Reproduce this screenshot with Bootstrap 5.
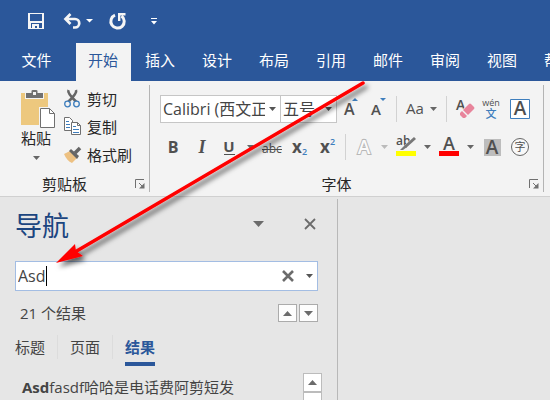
<!DOCTYPE html>
<html lang="zh-CN">
<head>
<meta charset="utf-8">
<meta name="viewport" content="width=device-width, initial-scale=1">
<title>导航</title>
<link href="https://cdn.jsdelivr.net/npm/bootstrap@5.3.0/dist/css/bootstrap.min.css" rel="stylesheet">
<style>
  :root { --blue: #2b579a; --ink: #444; --line: #c6c6c6; }
  body { font-family: "Open Sans", "Noto Sans CJK SC", sans-serif; font-size: 15px; line-height: 20px; color: var(--ink); background: #e6e6e6; }
  button { font: inherit; color: inherit; background: none; border: 0; padding: 0; }
  svg { display: block; flex: none; overflow: visible; }
  .titlebar { background: var(--blue); height: 43px; padding: 0 26px; gap: 16px; }
  .ribbon-tabs { background: var(--blue); height: 38px; gap: 2px; }
  .ribbon-tabs .nav-link { flex: none; width: 55px; padding: 7px 1px 11px 0; border-radius: 0; color: #fff; text-align: center; }
  .ribbon-tabs .nav-link.file-tab { width: 74px; }
  .ribbon-tabs .nav-link.active { background: #f3f3f3; color: var(--blue); }
  .ribbon { background: #f3f3f3; height: 116px; padding: 4px 0; border-bottom: 1px solid #d0d0d0; color: #262626; }
  .group { border-right: 1px solid #b4b4b4; }
  .clip-group { width: 150px; flex: none; }
  .font-group { width: 394px; flex: none; padding-left: 9px; }
  .paste { width: 36px; margin: 5px 8px 0 18px; }
  .paste .more { margin-top: 8px; }
  .clip-list button { height: 28px; gap: 4px; white-space: nowrap; padding-left: 1px; }
  .caption-row { height: 16px; padding-right: 4px; }
  .caption-row span { padding-right: 6px; }
  .font-group .caption-row { margin-left: -9px; }
  .combo.form-select { height: 28px; padding: 0 15px 0 2px; border: 1px solid var(--line); border-radius: 0; font-size: 16px; line-height: 26px; color: var(--ink); background-color: #fff; background-position: right 4px center; background-size: 7px 4px; text-overflow: clip;
    background-image: url("data:image/svg+xml,%3Csvg xmlns='http://www.w3.org/2000/svg' viewBox='0 0 7 4'%3E%3Cpath d='M0 0h7L3.500 4z' fill='%23555'/%3E%3C/svg%3E"); }
  .combo-name { width: 121px; flex: none; margin-left: 1px; }
  .combo-size { width: 57px; flex: none; margin-left: -1px; }
  .tool-row { height: 28px; margin-top: 10px; }
  .tool { width: 28px; height: 28px; flex: none; display: flex; align-items: center; justify-content: center; color: #505050; }
  .tool.drop { width: 15px; }
  .tool.wide { width: 43px; gap: 5px; }
  .tool svg text { font-family: "Open Sans", "Noto Sans CJK SC", sans-serif; fill: #505050; }
  .tool svg .accent { fill: #3e7ebd; }
  .tool svg .hollow { fill: #fafafa; }
  .tool svg .serif { font-family: "Liberation Serif", serif; }
  .divider { width: 1px; height: 26px; margin: 0 3px; background: #d2d2d2; flex: none; }
  .nav-pane { width: 338px; flex: none; margin-top: 2px; padding: 0 19px 0 15px; border-right: 1px solid #b8b8b8; overflow: hidden; }
  .nav-pane > * { flex-shrink: 0; }
  .pane-title { font-size: 27px; font-weight: 400; line-height: 36px; color: #1b4580; margin: 0; padding-top: 4px; }
  .pane-head { height: 50px; padding-right: 2px; }
  .search { height: 30px; margin-top: 12px; background: #fff; border: 1px solid #a3bde3; padding-right: 4px; }
  .search input { min-width: 0; flex: 1; border: 0; outline: 0; padding: 0 2px; font-size: 16px; color: var(--ink); background: none; }
  .caret { position: absolute; left: 30px; top: 4px; width: 1px; height: 20px; background: #000; }
  .count { height: 44px; padding-left: 5px; gap: 2px; }
  .step { width: 19px; height: 18px; background: #fdfdfd; border: 1px solid #ababab; display: flex; align-items: center; justify-content: center; }
  .pane-tabs { gap: 12px; }
  .pane-tabs .nav-link { padding: 2px 0 5px; color: var(--ink); font-size: 15px; border-bottom: 4px solid transparent; border-radius: 0; }
  .pane-tabs .nav-link.active { color: var(--blue); font-weight: 700; border-color: var(--blue); }
  .tab-rule { width: 1px; height: 24px; background: #dcdcdc; }
  .results { margin-top: 7px; }
  .results a { color: var(--ink); text-decoration: none; padding: 4px 0 0 7px; white-space: nowrap; }
  .scroller { width: 19px; margin-right: -4px; }
  .scroller button, .thumb { width: 19px; height: 19px; background: #fff; border: 1px solid #bcbcbc; }
  .thumb { height: 80px; }
  .pointer { position: absolute; left: 0; top: 0; pointer-events: none; }
</style>
<script src="https://cdn.jsdelivr.net/npm/bootstrap@5.3.0/dist/js/bootstrap.bundle.min.js"></script>
</head>
<body class="vh-100 d-flex flex-column overflow-hidden position-relative">
<header>
  <div class="titlebar d-flex align-items-center">
    <button aria-label="保存"><svg width="20" height="20" viewBox="0 0 20 20"><path d="M2 1h16v16H2z" fill="#f5f5f5"/><path d="M4 2h12v7H4zM5 11h11v5H5z" fill="#2b579a"/><path d="M6 12h7v4h-2v-2H9v2H6z" fill="#f5f5f5"/></svg></button>
    <button aria-label="撤销" class="d-flex align-items-center"><svg width="20" height="18" viewBox="0 0 20 18"><path d="M8.500 1 3.500 6l5 5M4 6h9a4 4 0 0 1 0 8.500h-2" fill="none" stroke="#f5f5f5" stroke-width="2.700"/></svg><svg class="ms-1" width="7" height="6" viewBox="0 0 7 6"><path d="M0 0h7L3.500 3.500z" fill="#fff"/></svg></button>
    <button aria-label="重复"><svg width="18" height="18" viewBox="0 0 18 18"><path d="M6 2.200A6.700 6.700 0 1 0 12.500 3" fill="none" stroke="#f5f5f5" stroke-width="3"/><path d="M9 1.200h7.500M10.200 0v8" fill="none" stroke="#f5f5f5" stroke-width="2.400"/></svg></button>
    <button aria-label="自定义快速访问工具栏" class="ms-2"><svg width="6" height="7" viewBox="0 0 6 7"><path d="M0 0h6v1H0zM0 3h6L3 6.500z" fill="#fff"/></svg></button>
  </div>
  <nav class="ribbon-tabs nav flex-nowrap overflow-hidden">
    <a class="nav-link file-tab" href="#">文件</a><a class="nav-link active" href="#">开始</a><a class="nav-link" href="#">插入</a><a class="nav-link" href="#">设计</a><a class="nav-link" href="#">布局</a><a class="nav-link" href="#">引用</a><a class="nav-link" href="#">邮件</a><a class="nav-link" href="#">审阅</a><a class="nav-link" href="#">视图</a><a class="nav-link" href="#">帮助</a>
  </nav>
  <div class="ribbon d-flex overflow-hidden">
    <section class="group clip-group d-flex flex-column justify-content-between">
      <div class="d-flex align-items-start">
        <button class="paste d-flex flex-column align-items-center">
          <svg width="30" height="38" viewBox="0 0 30 38"><path d="M0 3h27v32H0z" fill="#edc87e"/><path d="M4 9V2h7V0h6v2h6v7z" fill="#f3f3f3"/><path d="M5 8V3h5.500V1Q10.500 0 12 0h3q1.500 0 1.500 1v2H22v5z" fill="#707070"/><path d="M12 2h3v3h-3z" fill="#f3f3f3"/><path d="M18 17h17v21H18z" fill="#f3f3f3"/><path d="M19.500 18.500h9l5 5v14h-14z" fill="#fff" stroke="#707070"/><path d="M28.500 18.500v5h5" fill="none" stroke="#707070"/></svg>
          <span>粘贴</span>
          <svg class="more" width="7" height="4" viewBox="0 0 7 4"><path d="M0 0h7L3.500 4z" fill="#666"/></svg>
        </button>
        <div class="clip-list d-flex flex-column">
          <button class="d-flex align-items-center"><svg width="20" height="20" viewBox="0 0 20 20"><path d="M5.500 1Q4 4 13.500 13M13 1q1.500 3-8 12" fill="none" stroke="#666" stroke-width="2.600"/><circle cx="4.500" cy="15" r="2.800" fill="#f3f3f3" stroke="#3e7ebd" stroke-width="1.300"/><circle cx="13.500" cy="15" r="2.800" fill="#f3f3f3" stroke="#3e7ebd" stroke-width="1.300"/></svg>剪切</button>
          <button class="d-flex align-items-center"><svg width="20" height="20" viewBox="0 0 20 20"><path d="M1.500.500h5l3 3v10h-8z" fill="#fff" stroke="#707070"/><path d="M3 4.500h3M3 7.500h4M3 10.500h4" stroke="#3e7ebd"/><path d="M8.500 5.500h6l3 3v9h-9z" fill="#fff" stroke="#707070"/><path d="M14.500 5.500v3h3" fill="none" stroke="#707070"/><path d="M10 9.500h3M10 12.500h6M10 15.500h6" stroke="#3e7ebd"/></svg>复制</button>
          <button class="d-flex align-items-center"><svg width="20" height="20" viewBox="0 0 20 20"><path d="m1 9 6-3 7 7-5 5q-5-2-8-9z" fill="#edc182"/><path d="m8 4 8 7-2 3-8-8z" fill="#666"/><path d="m12 8 5-5" stroke="#666" stroke-width="3.500"/></svg>格式刷</button>
        </div>
      </div>
      <div class="caption-row d-flex align-items-center"><span class="flex-fill text-center">剪贴板</span><button aria-label="剪贴板选项"><svg width="10" height="10" viewBox="0 0 10 10"><path d="M.5 9V.500H9M4 4l4 4" fill="none" stroke="#707070"/><path d="M9.500 4v5.500H4z" fill="#707070"/></svg></button></div>
    </section>
    <section class="group font-group d-flex flex-column justify-content-between">
      <div>
        <div class="tool-row d-flex align-items-center">
          <select class="combo combo-name form-select" aria-label="字体"><option>Calibri (西文正文)</option></select>
          <select class="combo combo-size form-select" aria-label="字号"><option>五号</option></select>
          <button class="tool" aria-label="增大字号"><svg width="20" height="20" viewBox="0 0 20 20"><text x="3" y="16" font-size="16" font-weight="600">A</text><path d="M11 2h6l-3-3z" fill="#3e7ebd"/></svg></button>
          <button class="tool" aria-label="减小字号"><svg width="20" height="20" viewBox="0 0 20 20"><text x="2" y="16" font-size="15" font-weight="600">A</text><path d="M11-1h6l-3 3z" fill="#3e7ebd"/></svg></button>
          <span class="divider"></span>
          <button class="tool wide" aria-label="更改大小写"><svg width="18" height="20" viewBox="0 0 18 20"><text x="-1" y="15" font-size="15">Aa</text></svg><svg width="7" height="4" viewBox="0 0 7 4"><path d="M0 0h7L3.500 4z" fill="#666"/></svg></button>
          <span class="divider"></span>
          <button class="tool" aria-label="清除格式"><svg width="20" height="20" viewBox="0 0 20 20"><text x="2" y="11" font-size="14" font-weight="600">A</text><path d="m5 14 9-9 2-1 4 4v2l-9 9H8z" fill="#f3f3f3"/><path d="m9 11 6-6q1-1 2 0l3 3q1 1 0 2l-6 6z" fill="#e8849b"/><path d="m8 12 5 5-2 2H9l-3-3v-2z" fill="#e8849b"/></svg></button>
          <button class="tool" aria-label="拼音指南"><svg width="20" height="24" viewBox="0 0 20 24"><text x="9" y="9" font-size="9" text-anchor="middle">wén</text><text class="accent" x="9" y="21" font-size="11" font-weight="500" text-anchor="middle">文</text></svg></button>
          <button class="tool" aria-label="字符边框"><svg width="20" height="20" viewBox="0 0 20 20"><path d="M.5.500h19v19H.500z" fill="#fff" stroke="#3e7ebd"/><text x="10" y="16" font-size="19" font-weight="600" text-anchor="middle">A</text></svg></button>
        </div>
        <div class="tool-row d-flex align-items-center">
          <button class="tool" aria-label="加粗"><svg width="20" height="20" viewBox="0 0 20 20"><text x="10" y="16" font-size="16" font-weight="700" text-anchor="middle">B</text></svg></button>
          <button class="tool" aria-label="倾斜"><svg width="20" height="20" viewBox="0 0 20 20"><text class="serif" x="11" y="16" font-size="18" font-weight="700" font-style="italic" text-anchor="middle">I</text></svg></button>
          <button class="tool" aria-label="下划线"><svg width="20" height="20" viewBox="0 0 20 20"><text x="10" y="15" font-size="15" font-weight="700" text-anchor="middle">U</text><path d="M5 17h11v1H5z" fill="#505050"/></svg></button>
          <button class="tool drop" aria-label="下划线样式"><svg width="7" height="4" viewBox="0 0 7 4"><path d="M0 0h7L3.500 4z" fill="#666"/></svg></button>
          <button class="tool" aria-label="删除线"><svg width="22" height="20" viewBox="0 0 22 20"><text x="11" y="16" font-size="12" text-anchor="middle">abc</text><path d="M1 12h20v1H1z" fill="#505050"/></svg></button>
          <button class="tool" aria-label="下标"><svg width="20" height="20" viewBox="0 0 20 20"><text x="2" y="16" font-size="17" font-weight="700">x</text><text class="accent" x="12" y="18" font-size="9" font-weight="600">2</text></svg></button>
          <button class="tool" aria-label="上标"><svg width="20" height="20" viewBox="0 0 20 20"><text x="2" y="16" font-size="17" font-weight="700">x</text><text class="accent" x="12" y="8" font-size="9" font-weight="600">2</text></svg></button>
          <span class="divider"></span>
          <button class="tool" aria-label="文本效果"><svg width="20" height="20" viewBox="0 0 20 20"><text class="hollow" x="11" y="17" font-size="19" font-weight="600" text-anchor="middle" stroke="#b8b8b8" stroke-width="2" paint-order="stroke">A</text></svg></button>
          <button class="tool drop" aria-label="文本效果选项"><svg width="7" height="4" viewBox="0 0 7 4"><path d="M0 0h7L3.500 4z" fill="#bbb"/></svg></button>
          <button class="tool" aria-label="突出显示"><svg width="20" height="22" viewBox="0 0 20 22"><text x="0" y="9" font-size="12" font-weight="600">ab</text><path d="m19 2-9 9" stroke="#f3f3f3" stroke-width="4"/><path d="m19 2-10 9" stroke="#777" stroke-width="3"/><path d="m9 9 2 2-4 3H4z" fill="#777"/><path d="M0 15h20v5H0z" fill="#ff0"/></svg></button>
          <button class="tool drop" aria-label="突出显示颜色"><svg width="7" height="4" viewBox="0 0 7 4"><path d="M0 0h7L3.500 4z" fill="#666"/></svg></button>
          <button class="tool" aria-label="字体颜色"><svg width="20" height="22" viewBox="0 0 20 22"><text x="10" y="14" font-size="18" font-weight="600" text-anchor="middle">A</text><path d="M0 15h20v5H0z" fill="#f00"/></svg></button>
          <button class="tool drop" aria-label="更多颜色"><svg width="7" height="4" viewBox="0 0 7 4"><path d="M0 0h7L3.500 4z" fill="#666"/></svg></button>
          <button class="tool" aria-label="字符底纹"><svg width="17" height="17" viewBox="0 0 17 17"><path d="M0 0h17v17H0z" fill="#bdbdbd"/><text x="8" y="15" font-size="19" font-weight="600" text-anchor="middle">A</text></svg></button>
          <button class="tool" aria-label="带圈字符"><svg width="20" height="20" viewBox="0 0 20 20"><circle cx="10" cy="10" r="8.500" fill="#f8f8f8" stroke="#666"/><text x="10" y="14" font-size="11" text-anchor="middle">字</text></svg></button>
        </div>
      </div>
      <div class="caption-row d-flex align-items-center"><span class="flex-fill text-center">字体</span><button aria-label="字体选项"><svg width="10" height="10" viewBox="0 0 10 10"><path d="M.5 9V.500H9M4 4l4 4" fill="none" stroke="#707070"/><path d="M9.500 4v5.500H4z" fill="#707070"/></svg></button></div>
    </section>
  </div>
</header>
<main class="d-flex flex-fill overflow-hidden">
  <aside class="nav-pane d-flex flex-column">
    <div class="pane-head d-flex align-items-center">
      <h1 class="pane-title flex-fill">导航</h1>
      <button aria-label="窗格选项"><svg width="11" height="6" viewBox="0 0 11 6"><path d="M0 0h11L5.500 6z" fill="#6b6b6b"/></svg></button>
      <button aria-label="关闭" class="ms-4 ps-3"><svg width="12" height="12" viewBox="0 0 12 12"><path d="m1 1 10 10M11 1 1 11" stroke="#6b6b6b" stroke-width="1.800"/></svg></button>
    </div>
    <div class="search d-flex align-items-center position-relative">
      <input type="text" value="Asd" aria-label="搜索文档"><span class="caret"></span>
      <button aria-label="清除"><svg width="12" height="12" viewBox="0 0 12 12"><path d="m1 1 10 10M11 1 1 11" stroke="#6b6b6b" stroke-width="2.600"/></svg></button>
      <button aria-label="搜索选项" class="ms-2 ps-1"><svg width="7" height="4" viewBox="0 0 7 4"><path d="M0 0h7L3.500 4z" fill="#555"/></svg></button>
    </div>
    <div class="count d-flex align-items-center">
      <span class="flex-fill">21 个结果</span>
      <button class="step" aria-label="上一个"><svg width="9" height="5" viewBox="0 0 9 5"><path d="M0 5h9L4.500 0z" fill="#6b6b6b"/></svg></button>
      <button class="step" aria-label="下一个"><svg width="9" height="5" viewBox="0 0 9 5"><path d="M0 0h9L4.500 5z" fill="#6b6b6b"/></svg></button>
    </div>
    <nav class="pane-tabs nav flex-nowrap">
      <a class="nav-link" href="#">标题</a><span class="tab-rule"></span><a class="nav-link" href="#">页面</a><span class="tab-rule"></span><a class="nav-link active" href="#">结果</a>
    </nav>
    <div class="results d-flex justify-content-between">
      <a href="#"><b>Asd</b>fasdf哈哈是电话费阿剪短发</a>
      <div class="scroller"><button class="d-flex align-items-center justify-content-center" aria-label="向上滚动"><svg width="9" height="5" viewBox="0 0 9 5"><path d="M0 5h9L4.500 0z" fill="#6b6b6b"/></svg></button><div class="thumb"></div></div>
    </div>
  </aside>
</main>
<svg class="pointer" width="400" height="290" viewBox="0 0 400 290" aria-hidden="true">
  <defs><filter id="soft" x="-10%" y="-10%" width="120%" height="120%"><feDropShadow dx="3" dy="4" stdDeviation="2.500" flood-color="#000" flood-opacity=".6"/></filter></defs>
  <g filter="url(#soft)"><path d="M363 83 75 252" stroke="#f00" stroke-width="3.500" stroke-linecap="round"/><path d="m56 263 19-19 1 7 7 5z" fill="#f00"/></g>
</svg>
</body>
</html>
